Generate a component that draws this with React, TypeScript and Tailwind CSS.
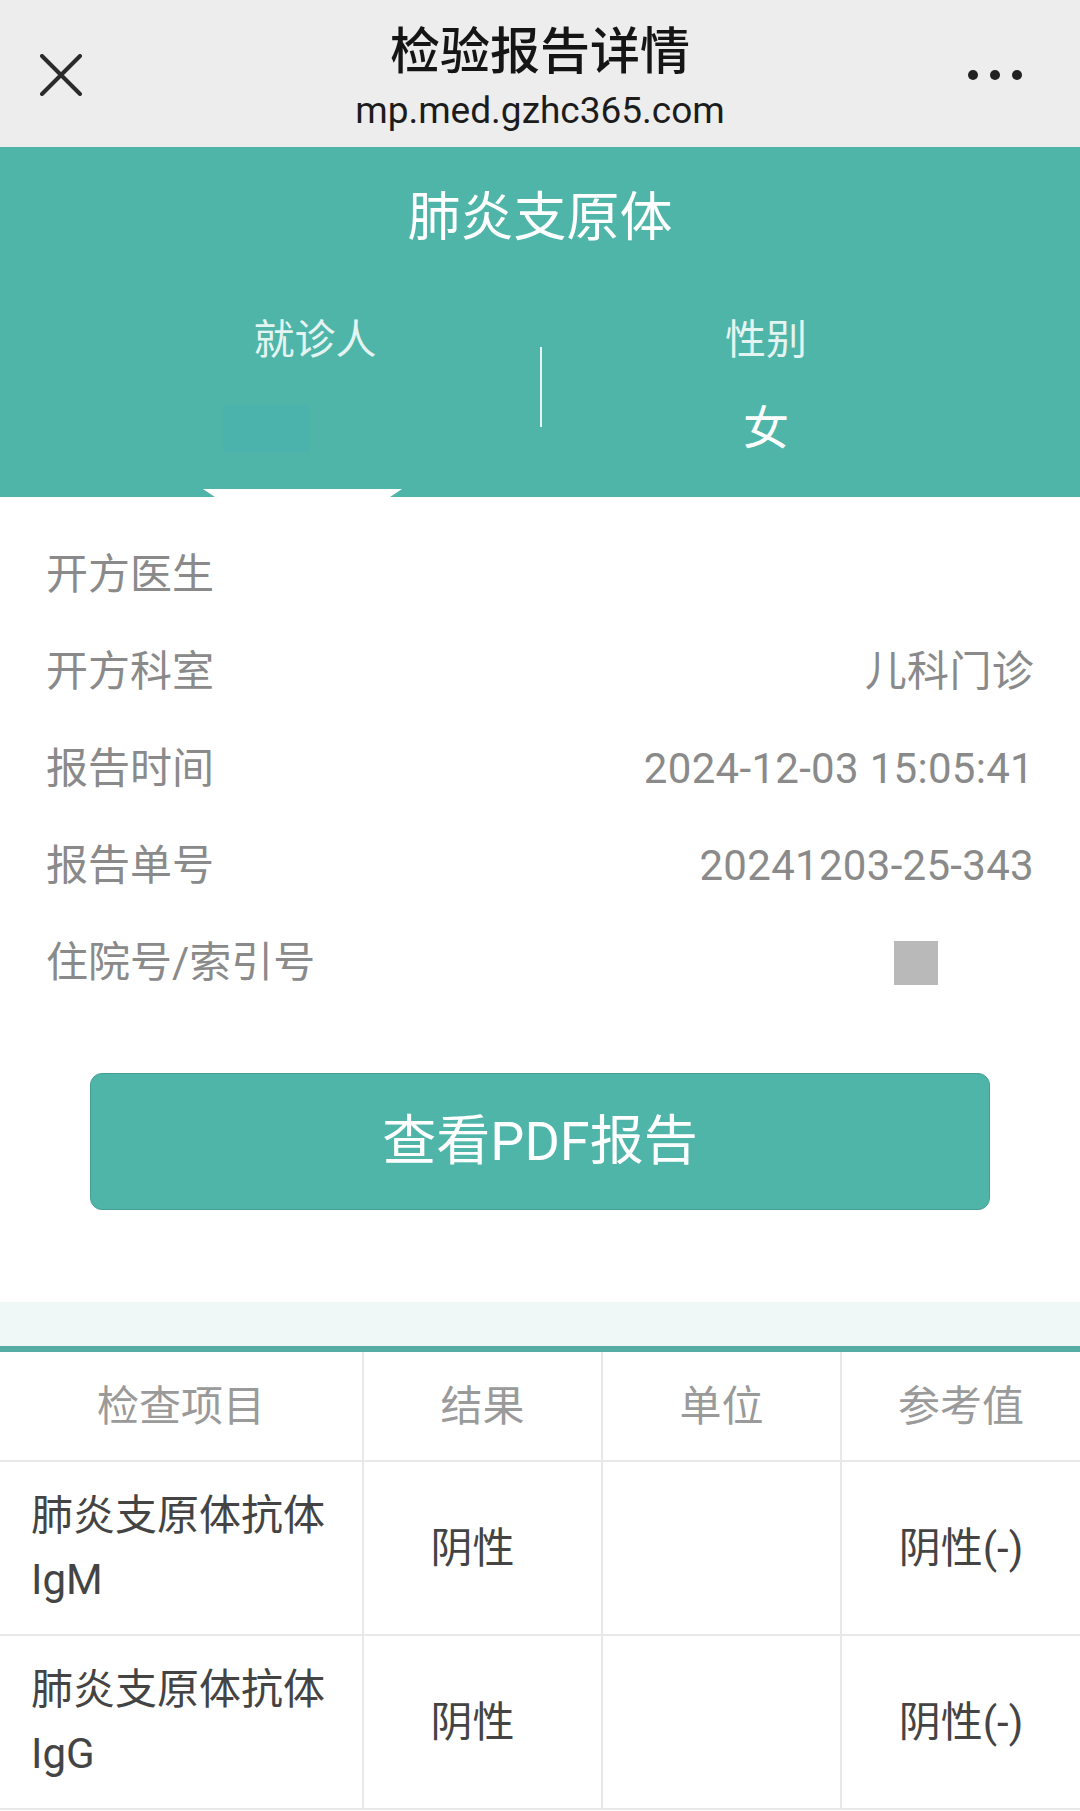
import React from "react";

const infoRows = [
  { label: "开方医生", value: "" },
  { label: "开方科室", value: "儿科门诊" },
  { label: "报告时间", value: "2024-12-03 15:05:41" },
  { label: "报告单号", value: "20241203-25-343" },
];

const results = [
  { name: "肺炎支原体抗体", suffix: "IgM", result: "阴性", unit: "", ref: "阴性(-)" },
  { name: "肺炎支原体抗体", suffix: "IgG", result: "阴性", unit: "", ref: "阴性(-)" },
];

const App = () => {
  return (
    <div className="w-[1080px] min-h-[1811px] bg-white font-['Roboto','Noto_Sans_CJK_SC',sans-serif]">
      {/* top bar */}
      <header className="h-[147px] bg-[#ededed] grid grid-cols-[1fr_auto_1fr] items-start">
        <div className="pl-[40px] pt-[54px]">
          <svg width="42" height="42" viewBox="0 0 42 42" fill="none">
            <path d="M2 2 L40 40 M40 2 L2 40" stroke="#2b2b2b" strokeWidth="4" strokeLinecap="round" />
          </svg>
        </div>
        <div className="flex flex-col items-center pt-[22px]">
          <h1 className="text-[50px] leading-[60px] font-medium text-[#151515]">检验报告详情</h1>
          <p className="mt-[7px] text-[37px] leading-[44px] text-[#1c1c1c]">mp.med.gzhc365.com</p>
        </div>
        <div className="flex justify-end gap-[12px] pr-[58px] pt-[70px]">
          <span className="w-[10px] h-[10px] rounded-full bg-[#222]" />
          <span className="w-[10px] h-[10px] rounded-full bg-[#222]" />
          <span className="w-[10px] h-[10px] rounded-full bg-[#222]" />
        </div>
      </header>

      {/* patient summary */}
      <section className="h-[350px] bg-[#4fb5a9] flex flex-col">
        <div className="h-[144px] flex items-center justify-center">
          <h2 className="text-[53px] text-white">肺炎支原体</h2>
        </div>
        <div className="flex px-[90px]">
          <div className="w-[450px] flex flex-col">
            <div className="h-[100px] flex items-center justify-center text-[41px] text-[#e3f4f1]">就诊人</div>
            <div className="h-[74px] flex items-center pl-[133px]">
              <span className="w-[87px] h-[47px] bg-[#4cb3ac]" />
            </div>
          </div>
          <div className="w-[2px] h-[80px] mt-[56px] bg-[#e6f5f2]" />
          <div className="w-[448px] flex flex-col">
            <div className="h-[100px] flex items-center justify-center text-[41px] text-[#e3f4f1]">性别</div>
            <div className="h-[74px] flex items-center justify-center text-[46px] text-white">女</div>
          </div>
        </div>
        <div className="flex-1 flex items-end pl-[203px]">
          <div className="w-[199px] h-[8px] bg-white [clip-path:polygon(0_0,100%_0,94%_100%,6%_100%)]" />
        </div>
      </section>

      {/* report info */}
      <section className="pt-[29px] px-[46px]">
        {infoRows.map((row) => (
          <div key={row.label} className="h-[97px] flex items-center justify-between text-[42px] text-[#8a8a8a]">
            <span>{row.label}</span>
            <span className="tracking-[0.3px]">{row.value}</span>
          </div>
        ))}
        <div className="h-[97px] flex items-center justify-between text-[42px] text-[#8a8a8a]">
          <span>住院号/索引号</span>
          <span className="w-[44px] h-[44px] bg-[#b9b9b9] mr-[96px]" />
        </div>
      </section>

      <div className="px-[90px] pt-[62px] pb-[92px]">
        <button className="w-full h-[137px] rounded-[12px] border border-[#459f95] bg-[#4fb5a9] text-[54px] text-white">
          查看PDF报告
        </button>
      </div>

      <div className="h-[44px] bg-[#eff8f7]" />
      <div className="h-[6px] bg-[#55ada5]" />

      {/* result table */}
      <div className="grid grid-cols-[362px_239px_239px_240px] text-[42px]">
        <div className="h-[110px] flex items-center justify-center text-[#9a9a9a] border-b-2 border-[#e8e8e8]">检查项目</div>
        <div className="h-[110px] flex items-center justify-center text-[#9a9a9a] border-b-2 border-l-2 border-[#e8e8e8]">结果</div>
        <div className="h-[110px] flex items-center justify-center text-[#9a9a9a] border-b-2 border-l-2 border-[#e8e8e8]">单位</div>
        <div className="h-[110px] flex items-center justify-center text-[#9a9a9a] border-b-2 border-l-2 border-[#e8e8e8]">参考值</div>
        {results.map((r) => (
          <React.Fragment key={r.suffix}>
            <div className="h-[174px] flex items-center pl-[31px] leading-[64px] text-[#444] border-b-2 border-[#e8e8e8]">
              <span>
                {r.name}
                <br />
                {r.suffix}
              </span>
            </div>
            <div className="h-[174px] flex items-center justify-center pr-[20px] text-[#444] border-b-2 border-l-2 border-[#e8e8e8]">{r.result}</div>
            <div className="h-[174px] flex items-center justify-center text-[#444] border-b-2 border-l-2 border-[#e8e8e8]">{r.unit}</div>
            <div className="h-[174px] flex items-center justify-center text-[#444] border-b-2 border-l-2 border-[#e8e8e8]">{r.ref}</div>
          </React.Fragment>
        ))}
      </div>
    </div>
  );
};

export default App;
